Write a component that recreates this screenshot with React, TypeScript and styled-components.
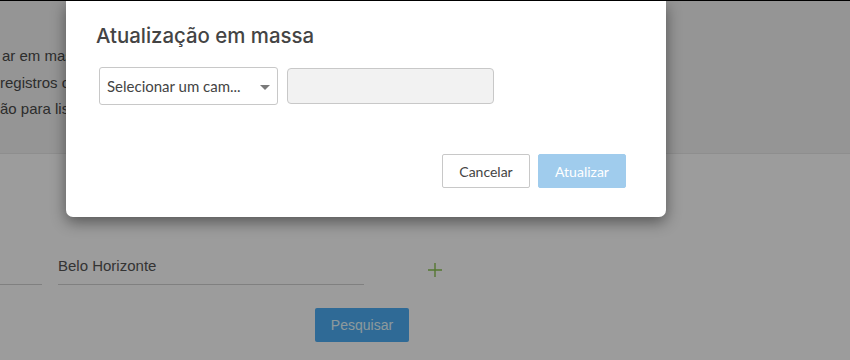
import React from "react";
import styled, { createGlobalStyle } from "styled-components";

const Global = createGlobalStyle`
  html, body { margin: 0; padding: 0; }
  body { width: 850px; height: 360px; overflow: hidden; background: #fff; }
  * { box-sizing: border-box; }
`;

const Page = styled.div`
  position: relative;
  width: 850px;
  height: 360px;
  overflow: hidden;
  border-top: 1px solid #000;
  background: #fff;
  font-family: "Liberation Sans", Arial, sans-serif;
`;

const Header = styled.div`
  height: 153px;
  background: #f3f3f3;
  border-bottom: 1px solid #e9e9e9;
  padding-top: 42px;
`;

const InfoLine = styled.div<{ $shift: number }>`
  width: 66px;
  overflow: hidden;
  padding-left: ${(p) => p.$shift}px;
  font-size: 15px;
  line-height: 26.5px;
  color: #4a4a4a;
  white-space: nowrap;
`;

const Body = styled.div`
  padding-top: 97px;
`;

const FieldRow = styled.div`
  display: flex;
  align-items: flex-end;
`;

const Field = styled.div<{ $w: number }>`
  width: ${(p) => p.$w}px;
  height: 34px;
  border-bottom: 1px solid #d2d2d2;
  font-size: 15px;
  color: #555;
  line-height: 22px;
  padding-top: 4px;
  margin-right: 16px;
`;

const PlusWrap = styled.div`
  margin-left: 48px;
  margin-bottom: 8px;
  display: flex;
`;

const SearchButton = styled.button`
  margin: 23px 0 0 315px;
  width: 94px;
  height: 34px;
  border: 0;
  border-radius: 2px;
  background: #4dadf5;
  color: #e6fbff;
  font-family: "Liberation Sans", Arial, sans-serif;
  font-size: 14px;
`;

const Overlay = styled.div`
  position: absolute;
  inset: 0;
  background: rgba(0, 0, 0, 0.39);
`;

const Modal = styled.div`
  position: absolute;
  left: 66px;
  top: 0;
  width: 600px;
  height: 216px;
  background: #fff;
  border-radius: 0 0 7px 7px;
  box-shadow: 0 5px 15px rgba(0, 0, 0, 0.45);
  padding: 21px 40px 29px 30px;
  font-family: "Lato", "Open Sans", sans-serif;
  display: flex;
  flex-direction: column;
`;

const Title = styled.h2`
  margin: 0;
  font-family: "Inter", "Lato", sans-serif;
  font-size: 20.4px;
  line-height: 28px;
  font-weight: 500;
  color: #444;
`;

const Controls = styled.div`
  display: flex;
  align-items: center;
  gap: 9px;
  margin: 17px 0 0 3px;
`;

const Select = styled.div`
  width: 179px;
  height: 38px;
  border: 1px solid #c8c8c8;
  border-radius: 3px;
  display: flex;
  align-items: center;
  justify-content: space-between;
  padding: 0 7px 0 7px;
  font-size: 15px;
  color: #444;
`;

const Caret = styled.span`
  width: 0;
  height: 0;
  border-left: 5px solid transparent;
  border-right: 5px solid transparent;
  border-top: 5px solid #7a7a7a;
  margin-top: 2px;
`;

const ValueInput = styled.div`
  width: 207px;
  height: 36px;
  border: 1px solid #c8c8c8;
  border-radius: 4px;
  background: #f2f2f2;
`;

const Footer = styled.div`
  margin-top: auto;
  display: flex;
  justify-content: flex-end;
  gap: 8px;
`;

const Btn = styled.button<{ $primary?: boolean }>`
  width: 88px;
  height: 34px;
  border-radius: 2px;
  font-family: "Lato", "Open Sans", sans-serif;
  font-size: 14px;
  border: 1px solid ${(p) => (p.$primary ? "#a0cced" : "#c8c8c8")};
  background: ${(p) => (p.$primary ? "#a0cced" : "#fff")};
  color: ${(p) => (p.$primary ? "#fff" : "#444")};
`;

export default function App() {
  return (
    <>
      <Global />
      <Page>
        <Header>
          <InfoLine $shift={2}>ar em massa</InfoLine>
          <InfoLine $shift={0}>registros com</InfoLine>
          <InfoLine $shift={0}>ão para listas</InfoLine>
        </Header>
        <Body>
          <FieldRow>
            <Field $w={42} />
            <Field $w={306}>Belo Horizonte</Field>
            <PlusWrap>
              <svg width="14" height="14" viewBox="0 0 14 14">
                <path d="M7 0v14M0 7h14" stroke="#8bc452" strokeWidth="1.4" />
              </svg>
            </PlusWrap>
          </FieldRow>
          <SearchButton>Pesquisar</SearchButton>
        </Body>
        <Overlay />
        <Modal>
          <Title>Atualização em massa</Title>
          <Controls>
            <Select>
              <span>Selecionar um cam...</span>
              <Caret />
            </Select>
            <ValueInput />
          </Controls>
          <Footer>
            <Btn>Cancelar</Btn>
            <Btn $primary>Atualizar</Btn>
          </Footer>
        </Modal>
      </Page>
    </>
  );
}
